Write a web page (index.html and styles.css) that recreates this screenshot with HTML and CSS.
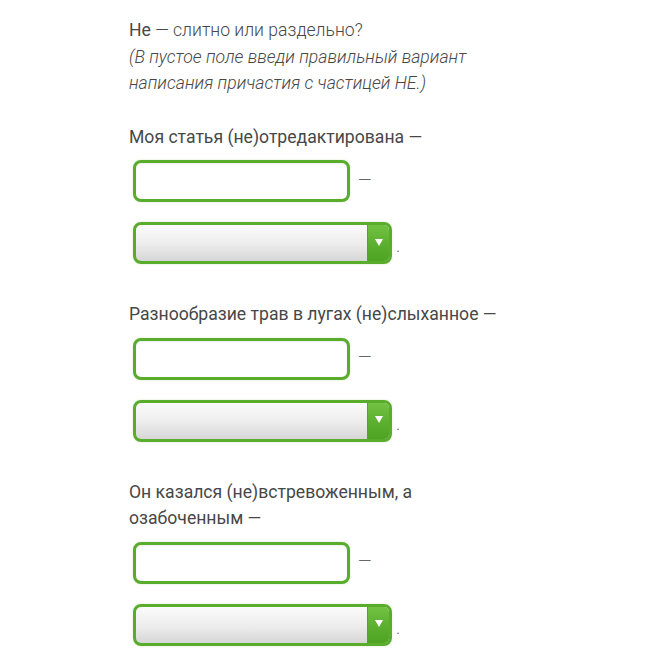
FILE: index.html
```html
<!DOCTYPE html>
<html lang="ru">
<head>
<meta charset="utf-8">
<link rel="stylesheet" href="styles.css">
</head>
<body>
<div class="page">
  <div class="intro">
    <p class="title"><span class="strong">Не</span> — слитно или раздельно?</p>
    <p class="hint">(В пустое поле введи правильный вариант написания причастия с частицей НЕ.)</p>
  </div>

  <div class="task">
    <p class="sentence">Моя статья (не)отредактирована —</p>
    <div class="row"><span class="field"></span><span class="after dash">—</span></div>
    <div class="row"><span class="select"><span class="arrow"></span></span><span class="after dot">.</span></div>
  </div>

  <div class="task">
    <p class="sentence">Разнообразие трав в лугах (не)слыханное —</p>
    <div class="row"><span class="field"></span><span class="after dash">—</span></div>
    <div class="row"><span class="select"><span class="arrow"></span></span><span class="after dot">.</span></div>
  </div>

  <div class="task">
    <p class="sentence">Он казался (не)встревоженным, а<br>озабоченным —</p>
    <div class="row"><span class="field"></span><span class="after dash">—</span></div>
    <div class="row"><span class="select"><span class="arrow"></span></span><span class="after dot">.</span></div>
  </div>
</div>
</body>
</html>
```

FILE: styles.css
```css
html, body {
  margin: 0;
  padding: 0;
  background: #ffffff;
}
.page {
  padding: 17px 0 0 129px;
  font-family: Roboto, "Noto Sans", sans-serif;
  font-size: 17.6px;
  line-height: 26.5px;
  color: #474747;
  width: 380px;
}
p { margin: 0; }
.title {
  font-weight: 300;
}
.title .strong {
  font-weight: 400;
}
.hint {
  font-weight: 300;
  font-style: italic;
  width: 360px;
}
.intro {
  margin-bottom: 27px;
}
.task {
  display: flex;
  flex-direction: column;
  margin-bottom: 37px;
}
.sentence {
  margin-bottom: 10px;
}
.row {
  display: flex;
  align-items: center;
  padding-left: 4px;
  margin-bottom: 20px;
}
.row:last-child { margin-bottom: 0; }
.field {
  box-sizing: border-box;
  width: 217px;
  height: 42px;
  border: 3px solid #5aac2c;
  border-radius: 8px;
  background: #fff;
  box-shadow: inset 0 1px 2px rgba(0,0,0,0.08), 0 0 2px rgba(90,172,44,0.3);
}
.select {
  box-sizing: border-box;
  width: 259px;
  height: 42px;
  border: 3px solid #5aac2c;
  border-radius: 8px;
  background: linear-gradient(to bottom, #fbfbfb 0%, #ececec 55%, #d6d6d6 100%);
  display: flex;
  justify-content: flex-end;
  overflow: hidden;
  box-shadow: 0 0 2px rgba(90,172,44,0.3);
}
.arrow {
  width: 21px;
  height: 100%;
  background: linear-gradient(to bottom, #72c143 0%, #5eb130 50%, #4ea322 100%);
  border-left: 1px solid #5aa02e;
  display: flex;
  align-items: center;
  justify-content: center;
}
.arrow::before {
  content: "";
  width: 0;
  height: 0;
  border-left: 4px solid transparent;
  border-right: 4px solid transparent;
  border-top: 7px solid #ffffff;
  margin-top: -2px;
}
.after {
  color: #666;
  font-weight: 300;
}
.dash {
  margin-left: 8px;
  margin-top: -2px;
}
.dot {
  margin-left: 4px;
  align-self: flex-end;
  margin-bottom: 9px;
  line-height: 18px;
}
```
